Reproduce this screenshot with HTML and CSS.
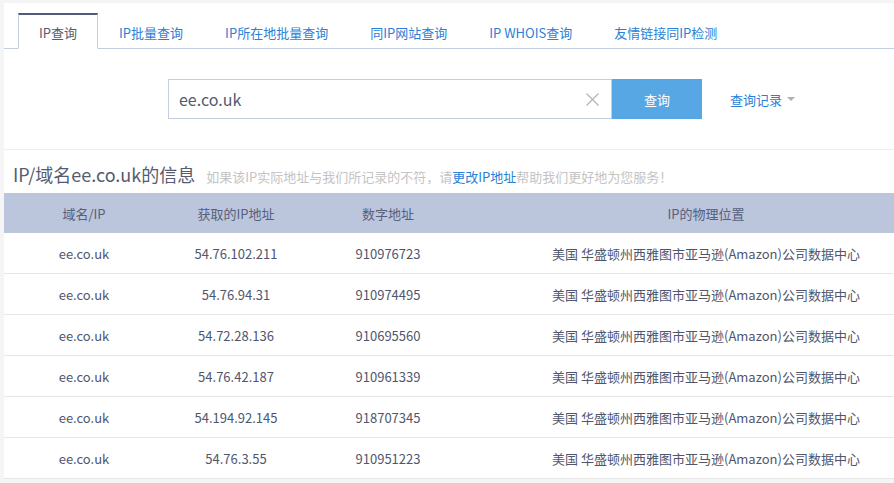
FILE: index.html
```html
<!DOCTYPE html>
<html lang="zh-CN">
<head>
<meta charset="utf-8">
<title>IP查询</title>
<link rel="stylesheet" href="styles.css">
</head>
<body>
<div class="panel">
  <div class="tabs">
    <a class="tab active">IP查询</a>
    <a class="tab">IP批量查询</a>
    <a class="tab">IP所在地批量查询</a>
    <a class="tab">同IP网站查询</a>
    <a class="tab">IP WHOIS查询</a>
    <a class="tab">友情链接同IP检测</a>
  </div>
  <div class="search">
    <div class="input">
      <span class="value">ee.co.uk</span>
      <svg class="clear" width="13" height="13" viewBox="0 0 13 13"><path d="M0.5 0.5 L12.5 12.5 M12.5 0.5 L0.5 12.5" stroke="#b4b4b4" stroke-width="1.2" fill="none"/></svg>
    </div>
    <button class="btn">查询</button>
    <a class="history">查询记录<span class="caret"></span></a>
  </div>
</div>
<div class="panel info">
  <div class="title">IP/域名ee.co.uk的信息<span class="sub">如果该IP实际地址与我们所记录的不符，请<a class="link">更改IP地址</a>帮助我们更好地为您服务！</span></div>
  <table class="grid">
    <colgroup><col class="c1"><col class="c2"><col class="c3"><col class="c4"></colgroup>
    <thead>
      <tr><th>域名/IP</th><th>获取的IP地址</th><th>数字地址</th><th class="loc">IP的物理位置</th></tr>
    </thead>
    <tbody>
      <tr><td>ee.co.uk</td><td>54.76.102.211</td><td>910976723</td><td class="loc">美国 华盛顿州西雅图市亚马逊(Amazon)公司数据中心</td></tr>
      <tr><td>ee.co.uk</td><td>54.76.94.31</td><td>910974495</td><td class="loc">美国 华盛顿州西雅图市亚马逊(Amazon)公司数据中心</td></tr>
      <tr><td>ee.co.uk</td><td>54.72.28.136</td><td>910695560</td><td class="loc">美国 华盛顿州西雅图市亚马逊(Amazon)公司数据中心</td></tr>
      <tr><td>ee.co.uk</td><td>54.76.42.187</td><td>910961339</td><td class="loc">美国 华盛顿州西雅图市亚马逊(Amazon)公司数据中心</td></tr>
      <tr><td>ee.co.uk</td><td>54.194.92.145</td><td>918707345</td><td class="loc">美国 华盛顿州西雅图市亚马逊(Amazon)公司数据中心</td></tr>
      <tr><td>ee.co.uk</td><td>54.76.3.55</td><td>910951223</td><td class="loc">美国 华盛顿州西雅图市亚马逊(Amazon)公司数据中心</td></tr>
    </tbody>
  </table>
</div>
</body>
</html>
```
FILE: styles.css
```css
html, body {
  margin: 0;
  padding: 0;
  overflow: hidden;
}
body {
  background: #f5f5f5;
  font-family: "Noto Sans CJK SC", "Open Sans", sans-serif;
  font-size: 13px;
  color: #555b70;
  padding: 3px 0 0 4px;
}
.panel {
  background: #fff;
}
.tabs {
  display: flex;
  padding: 10px 0 0 14px;
  border-bottom: 1px solid #c5cde0;
  height: 35px;
}
.tab {
  display: block;
  padding: 0 20px;
  border: 1px solid transparent;
  border-top-width: 2px;
  line-height: 35px;
  height: 33px;
  color: #2a7fd6;
  white-space: nowrap;
  cursor: pointer;
}
.tab.active {
  border-color: #c5cde0;
  border-top-color: #4f5b7d;
  border-bottom: 1px solid #fff;
  background: #fff;
  color: #555b70;
}
.search {
  display: flex;
  align-items: center;
  padding: 30px 0 30px 164px;
  border-bottom: 1px solid #eeeeee;
}
.input {
  height: 38px;
  width: 420px;
  border: 1px solid #c5cde0;
  display: flex;
  align-items: center;
  justify-content: space-between;
  padding: 0 12px 0 10px;
}
.value {
  font-size: 16px;
  color: #555b70;
}
.btn {
  width: 90px;
  height: 40px;
  border: 0;
  margin: 0;
  background: #56a7e3;
  color: #fff;
  font-family: inherit;
  font-size: 13px;
}
.history {
  margin-left: 28px;
  color: #2a7fd6;
  display: flex;
  align-items: center;
}
.caret {
  display: inline-block;
  margin-left: 5px;
  border-left: 4px solid transparent;
  border-right: 4px solid transparent;
  border-top: 4px solid #b0b0b0;
}
.title {
  padding: 10px 0 2px 9px;
  line-height: 28px;
  font-size: 18px;
  color: #555b70;
  white-space: nowrap;
}
.sub {
  font-size: 13px;
  color: #c4c4c4;
  margin-left: 11px;
}
.link {
  color: #2a7fd6;
}
.grid {
  border-collapse: collapse;
  width: 100%;
  table-layout: fixed;
}
.c1 { width: 160px; }
.c2 { width: 144px; }
.c3 { width: 160px; }
.c4 { width: auto; }
.grid th {
  background: #bbc5dc;
  color: #56607d;
  font-weight: normal;
  height: 40px;
  padding: 0;
  text-align: center;
}
.grid td {
  height: 40px;
  padding: 0;
  text-align: center;
  border-bottom: 1px solid #e6e6e6;
  color: #4f566e;
  white-space: nowrap;
}
.grid .loc {
  padding-left: 50px;
}
```
